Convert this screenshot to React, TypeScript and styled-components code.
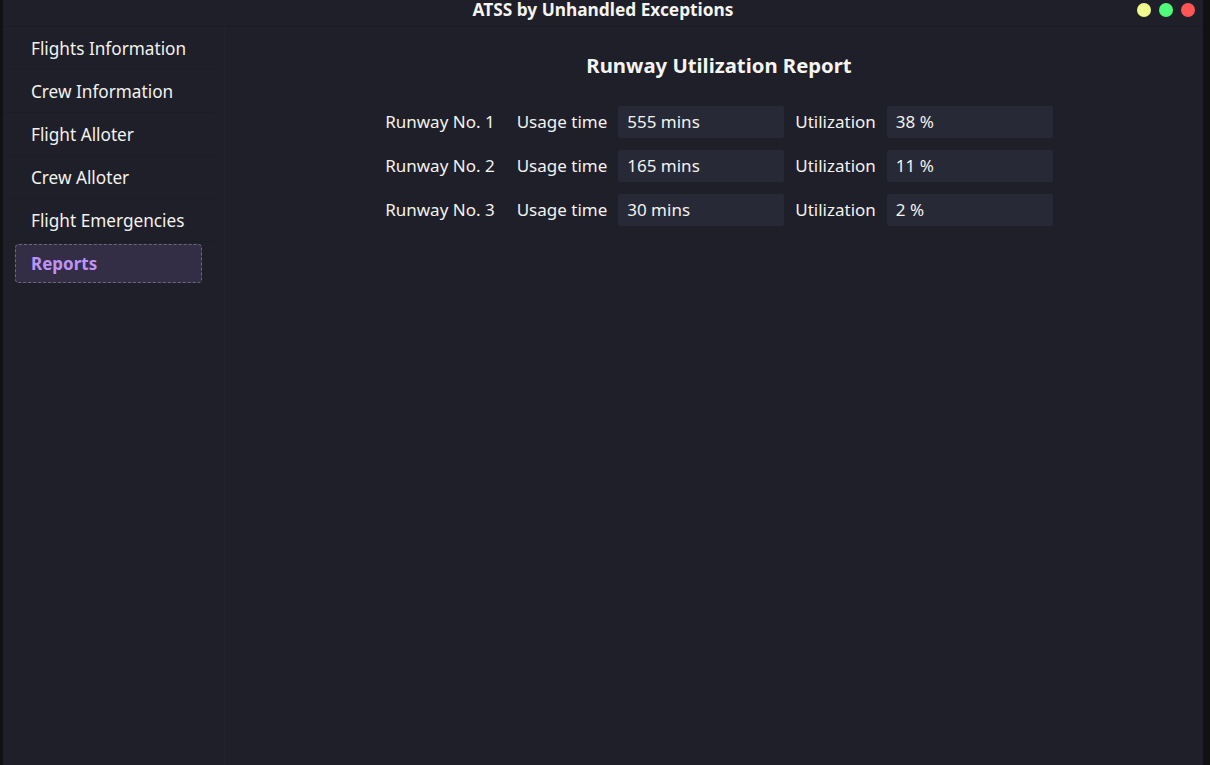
import React from "react";
import styled, { createGlobalStyle } from "styled-components";

const Global = createGlobalStyle`
  html, body { margin: 0; padding: 0; background: #111113; }
  #root { height: 765px; }
  * { box-sizing: border-box; }
`;

const Screen = styled.div`
  display: flex;
  height: 765px;
  width: 1210px;
  background: #111113;
  font-family: "Noto Sans", "Open Sans", sans-serif;
  color: #f1f1ec;
`;

const Window = styled.div`
  margin-left: 3px;
  width: 1200px;
  height: 765px;
  display: flex;
  flex-direction: column;
  background: #1f1f29;
`;

const TitleBar = styled.div`
  height: 27px;
  flex: none;
  position: relative;
  display: flex;
  align-items: center;
  justify-content: center;
  border-bottom: 1px solid #1b1b24;
`;

const Title = styled.div`
  font-size: 17.3px;
  font-weight: 700;
  color: #f4f4f0;
  margin-top: -7px;
`;

const Dots = styled.div`
  position: absolute;
  right: 8px;
  top: 3px;
  display: flex;
  gap: 8px;
`;

const Dot = styled.span<{ $c: string }>`
  width: 14px;
  height: 14px;
  border-radius: 50%;
  background: ${(p) => p.$c};
`;

const Body = styled.div`
  flex: 1;
  display: flex;
`;

const Sidebar = styled.nav`
  width: 222px;
  flex: none;
  border-right: 1px solid #23232d;
  padding-right: 10px;
  display: flex;
  flex-direction: column;
`;

const NavItem = styled.div`
  height: 43px;
  display: flex;
  align-items: center;
  padding-left: 28px;
  padding-top: 1px;
  font-size: 17.2px;
  color: #f2f2ee;
  border-bottom: 1px solid #1c1c25;
`;

const ActiveItem = styled.div`
  margin: 2px 12px 0 12px;
  height: 39px;
  display: flex;
  align-items: center;
  padding-left: 15px;
  font-size: 17px;
  font-weight: 700;
  color: #bd93f9;
  background: #332e45;
  border: 1px dashed #6c6a7a;
  border-radius: 4px;
`;

const Main = styled.main`
  flex: 1;
  display: flex;
  flex-direction: column;
  align-items: center;
  padding-left: 10px;
  padding-top: 24px;
`;

const Heading = styled.h1`
  margin: 0 0 27px;
  font-size: 20.3px;
  font-weight: 700;
  color: #f4f4f0;
`;

const Grid = styled.div`
  display: grid;
  grid-template-columns: auto auto 166px auto 166px;
  column-gap: 11px;
  row-gap: 12px;
  align-items: center;
`;

const Label = styled.span<{ $gap?: number }>`
  font-size: 17px;
  color: #f2f2ee;
  margin-right: ${(p) => p.$gap ?? 0}px;
  margin-bottom: 2px;
`;

const Field = styled.div`
  height: 32px;
  background: #282936;
  border-radius: 2px;
  display: flex;
  align-items: center;
  padding-left: 9px;
  padding-bottom: 2px;
  font-size: 17px;
  color: #f2f2ee;
`;

const rows = [
  { n: 1, t: "555 mins", u: "38 %" },
  { n: 2, t: "165 mins", u: "11 %" },
  { n: 3, t: "30 mins", u: "2 %" },
];

const items = ["Flights Information", "Crew Information", "Flight Alloter", "Crew Alloter", "Flight Emergencies"];

export default function App() {
  return (
    <Screen>
      <Global />
      <Window>
        <TitleBar>
          <Title>ATSS by Unhandled Exceptions</Title>
          <Dots>
            <Dot $c="#f1fa8c" />
            <Dot $c="#50fa7b" />
            <Dot $c="#ff5555" />
          </Dots>
        </TitleBar>
        <Body>
          <Sidebar>
            {items.map((i) => (
              <NavItem key={i}>{i}</NavItem>
            ))}
            <ActiveItem>Reports</ActiveItem>
          </Sidebar>
          <Main>
            <Heading>Runway Utilization Report</Heading>
            <Grid>
              {rows.map((r) => (
                <React.Fragment key={r.n}>
                  <Label $gap={11}>Runway No. {r.n}</Label>
                  <Label>Usage time</Label>
                  <Field>{r.t}</Field>
                  <Label>Utilization</Label>
                  <Field>{r.u}</Field>
                </React.Fragment>
              ))}
            </Grid>
          </Main>
        </Body>
      </Window>
    </Screen>
  );
}
